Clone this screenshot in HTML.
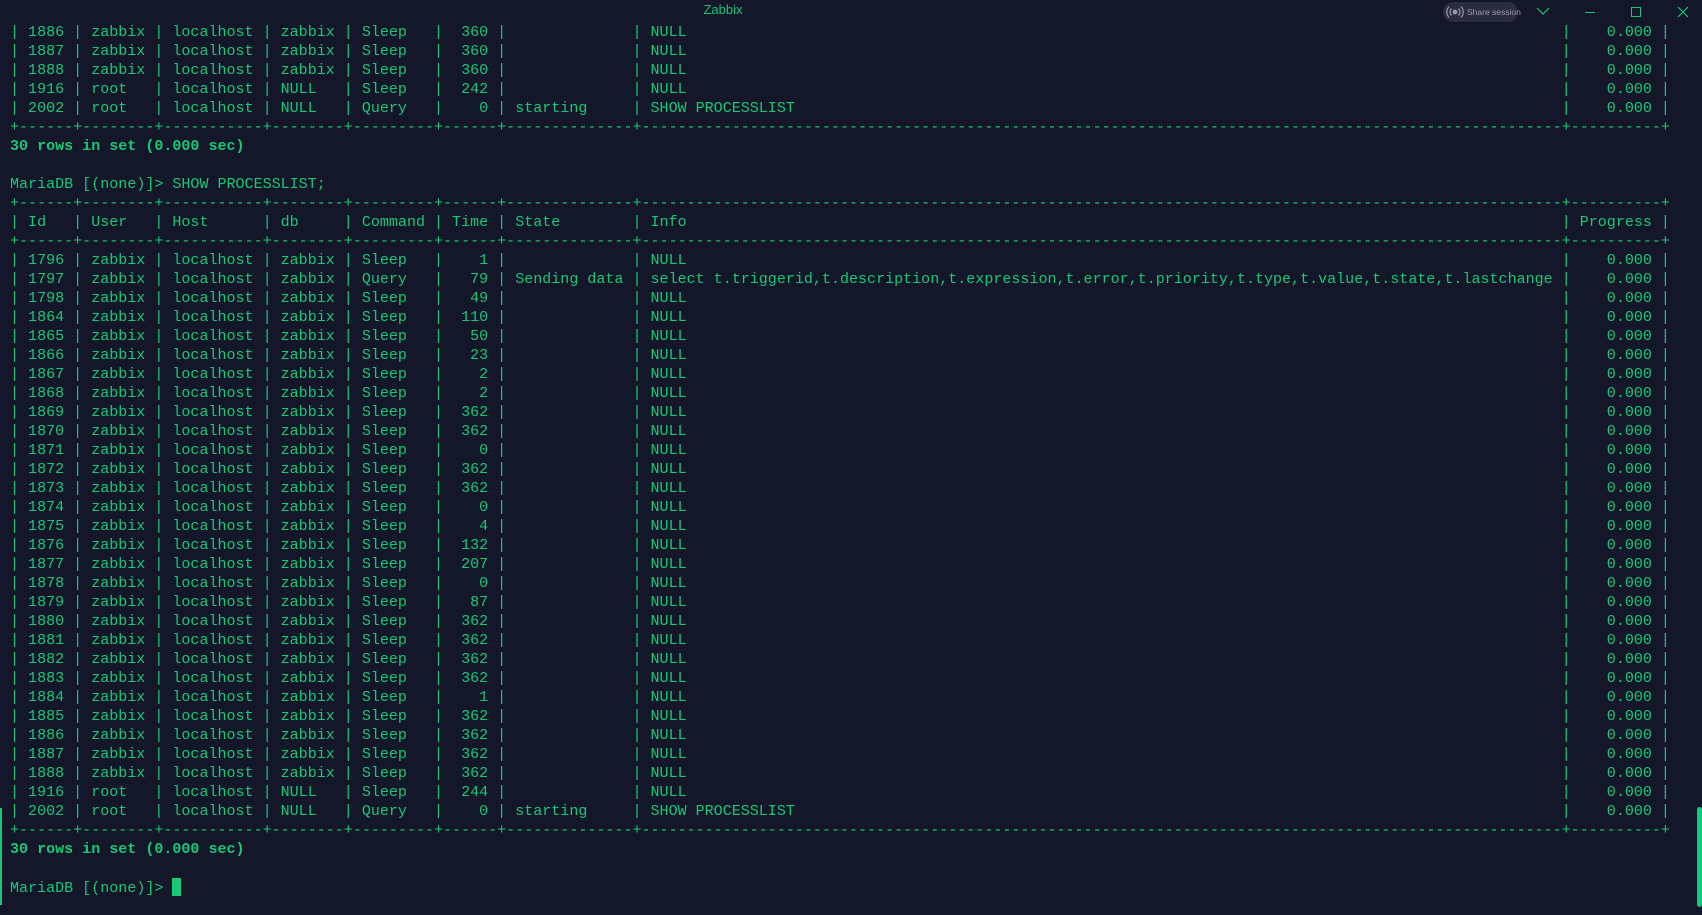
<!DOCTYPE html>
<html><head><meta charset="utf-8"><style>
html,body{margin:0;padding:0;background:#141729;width:1702px;height:915px;overflow:hidden}
.t{position:absolute;left:10px;top:23px;font-family:"Liberation Mono",monospace;font-size:15px;letter-spacing:0.02px;line-height:19px;color:#17c877;white-space:pre}
.t div{height:19px}
.i{display:inline-block;width:calc(103ch + 2.06px)}
b{font-weight:bold}
.cur{display:inline-block;width:9px;height:18px;background:#17c877;vertical-align:-4px}
.title{position:absolute;top:2px;left:0;width:1446px;text-align:center;font-family:"Liberation Sans",sans-serif;font-size:13px;color:#17c877}
.pill{position:absolute;left:1443px;top:2px;width:75px;height:20px;border-radius:10px;background:#2a2d3e;color:#9a9cae;font-family:"Liberation Sans",sans-serif;font-size:8.5px;line-height:20px;text-indent:24px;white-space:nowrap}
</style></head><body>
<div class="title">Zabbix</div>
<div class="pill">Share session</div>
<svg style="position:absolute;left:1445px;top:3px" width="20" height="18"><g fill="none" stroke="#9a9cae" stroke-width="1.2"><circle cx="10" cy="9" r="1.8" fill="#9a9cae"/><path d="M6.5 5.5a5 5 0 0 0 0 7M13.5 5.5a5 5 0 0 1 0 7M4 3.5a8 8 0 0 0 0 11M16 3.5a8 8 0 0 1 0 11"/></g></svg>
<svg style="position:absolute;left:1536px;top:6px" width="14" height="10"><path d="M1 2l6 6 6-6" fill="none" stroke="#17c877" stroke-width="1.2"/></svg>
<div style="position:absolute;left:1585px;top:12px;width:10px;height:1px;background:#17c877"></div>
<div style="position:absolute;left:1631px;top:7px;width:8px;height:8px;border:1px solid #17c877"></div>
<svg style="position:absolute;left:1677px;top:6px" width="12" height="12"><path d="M1 1l10 10M11 1L1 11" stroke="#17c877" stroke-width="1.2"/></svg>
<div style="position:absolute;left:0;top:808px;width:2px;height:97px;background:#17c877"></div>
<div style="position:absolute;left:1697px;top:807px;width:5px;height:100px;border-radius:3px;background:#17c877"></div>
<div class="t"><div>| 1886 | zabbix | localhost | zabbix | Sleep   |  360 |              <span class="i">| NULL</span>|    0.000 |</div><div>| 1887 | zabbix | localhost | zabbix | Sleep   |  360 |              <span class="i">| NULL</span>|    0.000 |</div><div>| 1888 | zabbix | localhost | zabbix | Sleep   |  360 |              <span class="i">| NULL</span>|    0.000 |</div><div>| 1916 | root   | localhost | NULL   | Sleep   |  242 |              <span class="i">| NULL</span>|    0.000 |</div><div>| 2002 | root   | localhost | NULL   | Query   |    0 | starting     <span class="i">| SHOW PROCESSLIST</span>|    0.000 |</div><div>+------+--------+-----------+--------+---------+------+--------------+------------------------------------------------------------------------------------------------------+----------+</div><div><b>30 rows in set (0.000 sec)</b></div><div> </div><div>MariaDB [(none)]&gt; SHOW PROCESSLIST;</div><div>+------+--------+-----------+--------+---------+------+--------------+------------------------------------------------------------------------------------------------------+----------+</div><div>| Id   | User   | Host      | db     | Command | Time | State        <span class="i">| Info</span>| Progress |</div><div>+------+--------+-----------+--------+---------+------+--------------+------------------------------------------------------------------------------------------------------+----------+</div><div>| 1796 | zabbix | localhost | zabbix | Sleep   |    1 |              <span class="i">| NULL</span>|    0.000 |</div><div>| 1797 | zabbix | localhost | zabbix | Query   |   79 | Sending data <span class="i">| select t.triggerid,t.description,t.expression,t.error,t.priority,t.type,t.value,t.state,t.lastchange</span>|    0.000 |</div><div>| 1798 | zabbix | localhost | zabbix | Sleep   |   49 |              <span class="i">| NULL</span>|    0.000 |</div><div>| 1864 | zabbix | localhost | zabbix | Sleep   |  110 |              <span class="i">| NULL</span>|    0.000 |</div><div>| 1865 | zabbix | localhost | zabbix | Sleep   |   50 |              <span class="i">| NULL</span>|    0.000 |</div><div>| 1866 | zabbix | localhost | zabbix | Sleep   |   23 |              <span class="i">| NULL</span>|    0.000 |</div><div>| 1867 | zabbix | localhost | zabbix | Sleep   |    2 |              <span class="i">| NULL</span>|    0.000 |</div><div>| 1868 | zabbix | localhost | zabbix | Sleep   |    2 |              <span class="i">| NULL</span>|    0.000 |</div><div>| 1869 | zabbix | localhost | zabbix | Sleep   |  362 |              <span class="i">| NULL</span>|    0.000 |</div><div>| 1870 | zabbix | localhost | zabbix | Sleep   |  362 |              <span class="i">| NULL</span>|    0.000 |</div><div>| 1871 | zabbix | localhost | zabbix | Sleep   |    0 |              <span class="i">| NULL</span>|    0.000 |</div><div>| 1872 | zabbix | localhost | zabbix | Sleep   |  362 |              <span class="i">| NULL</span>|    0.000 |</div><div>| 1873 | zabbix | localhost | zabbix | Sleep   |  362 |              <span class="i">| NULL</span>|    0.000 |</div><div>| 1874 | zabbix | localhost | zabbix | Sleep   |    0 |              <span class="i">| NULL</span>|    0.000 |</div><div>| 1875 | zabbix | localhost | zabbix | Sleep   |    4 |              <span class="i">| NULL</span>|    0.000 |</div><div>| 1876 | zabbix | localhost | zabbix | Sleep   |  132 |              <span class="i">| NULL</span>|    0.000 |</div><div>| 1877 | zabbix | localhost | zabbix | Sleep   |  207 |              <span class="i">| NULL</span>|    0.000 |</div><div>| 1878 | zabbix | localhost | zabbix | Sleep   |    0 |              <span class="i">| NULL</span>|    0.000 |</div><div>| 1879 | zabbix | localhost | zabbix | Sleep   |   87 |              <span class="i">| NULL</span>|    0.000 |</div><div>| 1880 | zabbix | localhost | zabbix | Sleep   |  362 |              <span class="i">| NULL</span>|    0.000 |</div><div>| 1881 | zabbix | localhost | zabbix | Sleep   |  362 |              <span class="i">| NULL</span>|    0.000 |</div><div>| 1882 | zabbix | localhost | zabbix | Sleep   |  362 |              <span class="i">| NULL</span>|    0.000 |</div><div>| 1883 | zabbix | localhost | zabbix | Sleep   |  362 |              <span class="i">| NULL</span>|    0.000 |</div><div>| 1884 | zabbix | localhost | zabbix | Sleep   |    1 |              <span class="i">| NULL</span>|    0.000 |</div><div>| 1885 | zabbix | localhost | zabbix | Sleep   |  362 |              <span class="i">| NULL</span>|    0.000 |</div><div>| 1886 | zabbix | localhost | zabbix | Sleep   |  362 |              <span class="i">| NULL</span>|    0.000 |</div><div>| 1887 | zabbix | localhost | zabbix | Sleep   |  362 |              <span class="i">| NULL</span>|    0.000 |</div><div>| 1888 | zabbix | localhost | zabbix | Sleep   |  362 |              <span class="i">| NULL</span>|    0.000 |</div><div>| 1916 | root   | localhost | NULL   | Sleep   |  244 |              <span class="i">| NULL</span>|    0.000 |</div><div>| 2002 | root   | localhost | NULL   | Query   |    0 | starting     <span class="i">| SHOW PROCESSLIST</span>|    0.000 |</div><div>+------+--------+-----------+--------+---------+------+--------------+------------------------------------------------------------------------------------------------------+----------+</div><div><b>30 rows in set (0.000 sec)</b></div><div> </div><div>MariaDB [(none)]&gt; <span class="cur"></span></div></div>
</body></html>
